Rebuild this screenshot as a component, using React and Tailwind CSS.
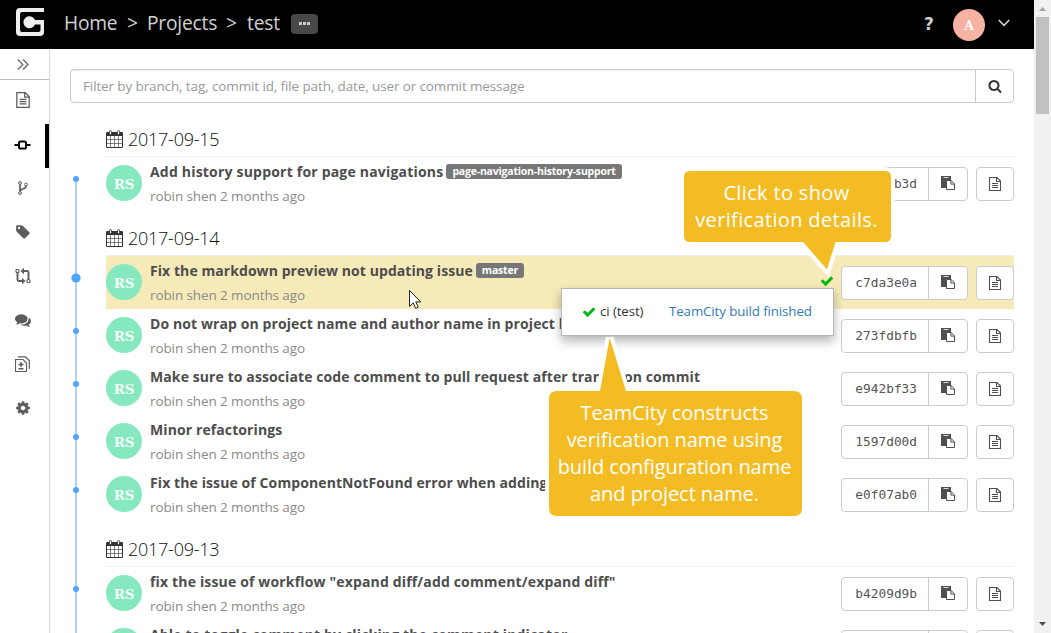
import React from "react";

const GEAR =
  "M1152 896q0-106-75-181t-181-75-181 75-75 181 75 181 181 75 181-75 75-181zm512-109v222q0 12-8 23t-20 13l-185 28q-19 54-39 91 35 50 107 138 10 12 10 25t-9 23q-27 37-99 108t-94 71q-12 0-26-9l-138-108q-44 23-91 38-16 136-29 186-7 28-36 28h-222q-14 0-24.5-8.5t-11.5-21.5l-28-184q-49-16-90-37l-141 107q-10 9-25 9-14 0-25-11-126-114-165-168-7-10-7-23 0-12 8-23 15-21 51-66.5t54-70.5q-27-50-41-99l-183-27q-13-2-21-12.5t-8-23.5v-222q0-12 8-23t19-13l186-28q14-46 39-92-40-57-107-138-10-12-10-24 0-10 9-23 26-36 98.5-107.5t94.5-71.5q13 0 26 10l138 107q44-23 91-38 16-136 29-186 7-28 36-28h222q14 0 24.5 8.5t11.5 21.5l28 184q49 16 90 37l142-107q9-9 24-9 13 0 25 10 129 119 165 170 7 8 7 22 0 12-8 23-15 21-51 66.5t-54 70.5q26 50 41 98l183 28q13 2 21 12.5t8 23.5z";
const TAG =
  "M576 448q0-53-37.5-90.5t-90.5-37.5-90.5 37.5-37.5 90.5 37.5 90.5 90.5 37.5 90.5-37.5 37.5-90.5zm1067 576q0 53-37 90l-491 492q-39 37-91 37-53 0-90-37l-715-716q-38-37-64.5-101t-26.5-117v-416q0-52 38-90t90-38h416q53 0 117 26.5t102 64.5l715 714q37 39 37 91z";
const COMMENTS =
  "M1408 768q0 139-94 257t-256.5 186.5-353.5 68.5q-86 0-176-16-124 88-278 128-36 9-86 16h-3q-11 0-20.5-8t-11.5-21q-1-3-1-6.5t.5-6.5 2-6l2.5-5 3.5-5.5 4-5 4.5-5 4-4.5q5-6 23-25t26-29.5 22.5-29 25-38.5 20.5-44q-124-72-195-177t-71-224q0-139 94-257t256.5-186.5 353.5-68.5 353.5 68.5 256.5 186.5 94 257zm384 256q0 120-71 224.5t-195 176.5q10 24 20.5 44t25 38.5 22.5 29 26 29.5 23 25q1 1 4 4.5t4.5 5 4 5 3.5 5.5l2.5 5 2 6 .5 6.5-1 6.5q-3 14-13 22t-22 7q-50-7-86-16-154-40-278-128-90 16-176 16-271 0-472-132 58 4 88 4 161 0 309-45t264-129q125-92 192-212t67-254q0-77-23-152 129 71 204 178t75 230z";
const SEARCH =
  "M1216 832q0-185-131.5-316.5t-316.5-131.5-316.5 131.5-131.5 316.5 131.5 316.5 316.5 131.5 316.5-131.5 131.5-316.5zm512 832q0 52-38 90t-90 38q-54 0-90-38l-343-342q-179 124-399 124-143 0-273.5-55.5t-225-150-150-225-55.5-273.5 55.5-273.5 150-225 225-150 273.5-55.5 273.5 55.5 225 150 150 225 55.5 273.5q0 220-124 399l343 343q37 37 37 90z";
const CHECK =
  "M1671 566q0 40-28 68l-724 724-136 136q-28 28-68 28t-68-28l-136-136-362-362q-28-28-28-68t28-68l136-136q28-28 68-28t68 28l294 295 656-657q28-28 68-28t68 28l136 136q28 28 28 68z";

function Glyph({ d, className }) {
  return (
    <svg viewBox="0 0 1792 1792" fill="currentColor" className={className}>
      <path d={d} />
    </svg>
  );
}

function FileIcon({ className = "" }) {
  return (
    <svg width="14" height="16" viewBox="0 0 14 16" fill="none" stroke="currentColor" className={className}>
      <path d="M1.5 1.5h7.5l3.5 3.5v9.5h-11zM8.5 1.5v4h4M4 7.5h6M4 9.5h6M4 11.5h6" strokeWidth="1.1" />
    </svg>
  );
}

function PasteIcon() {
  return (
    <svg width="14" height="14" viewBox="0 0 14 14" fill="none" className="text-[#4f4f4f]">
      <path d="M0 0h10v4h-4.6v8h-5.4z" fill="currentColor" />
      <path d="M2.5 1.5h5" stroke="#fff" strokeWidth="0.8" />
      <path d="M5.500 4.500h4.600l3.400 3.400v5.600h-8z" fill="#fff" stroke="currentColor" />
      <path d="M9.900 4.500v3.600h3.600" stroke="currentColor" />
    </svg>
  );
}

function CalendarIcon() {
  return (
    <svg width="17" height="18" viewBox="0 0 17 18" fill="none" className="text-[#333]">
      <path d="M0 3.200q0-1.200 1.200-1.200h14.600q1.200 0 1.200 1.200v13.600q0 1.200-1.200 1.200H1.200Q0 18 0 16.800z" fill="currentColor" />
      <path d="M1 6h15v11h-15z" fill="#fff" />
      <path d="M4.500 6v11M8.500 6v11M12.500 6v11M1 9.500h15M1 13.500h15" stroke="currentColor" strokeWidth="0.6" />
      <rect x="3.400" y="0.600" width="2.200" height="4" rx="1.100" fill="#fff" stroke="currentColor" strokeWidth="0.900" />
      <rect x="11.400" y="0.600" width="2.200" height="4" rx="1.100" fill="#fff" stroke="currentColor" strokeWidth="0.900" />
    </svg>
  );
}

function CommitIcon() {
  return (
    <svg width="17" height="12" viewBox="0 0 17 12" fill="none" stroke="currentColor" strokeWidth="2">
      <rect x="5" y="2.500" width="7" height="7" rx="1.600" />
      <path d="M0.500 6h4M12.500 6h4" />
    </svg>
  );
}

function BranchIcon() {
  return (
    <svg width="10" height="14" viewBox="0 0 10 14" fill="none" stroke="currentColor" strokeWidth="1">
      <circle cx="2" cy="2" r="1.400" />
      <circle cx="2" cy="12" r="1.400" />
      <circle cx="8" cy="3.500" r="1.400" />
      <path d="M2 3.400v7.200M8 5c0 3.600-5 2-5.700 5" strokeWidth="1.700" />
    </svg>
  );
}

function CompareIcon() {
  return (
    <svg width="16" height="16" viewBox="0 0 16 16" fill="none" stroke="currentColor">
      <rect x="1" y="1.500" width="3" height="3" rx="1" strokeWidth="1.200" />
      <rect x="12" y="11.500" width="3" height="3" rx="1" strokeWidth="1.200" />
      <path d="M2.500 5v6.500q0 1.500 1.500 1.500h3M13.500 11v-6.500q0-1.500-1.500-1.500h-3" strokeWidth="1.900" />
      <path d="M7 9.800l3.500 3.200-3.500 3.200zM9 -0.200l-3.500 3.200 3.500 3.200z" fill="currentColor" stroke="none" />
    </svg>
  );
}

function DiffIcon() {
  return (
    <svg width="15" height="16" viewBox="0 0 15 16" fill="none" stroke="currentColor">
      <path d="M0.500 3.500h7.500l3.500 3.500v8.500h-11z" strokeWidth="1.100" />
      <path d="M3 0.800h7.500l3.800 3.800v8.400" strokeWidth="1.200" />
      <path d="M3.500 8.500h5M6 6v5M3.500 12.800h5" strokeWidth="1.500" />
    </svg>
  );
}

function NavItem({ active, children }) {
  return (
    <div
      className={
        active
          ? "flex h-11 w-full items-center justify-center border-r-4 border-black pb-[3px] text-black"
          : "flex h-11 w-full items-center justify-center pr-1 pb-1 text-[#5c5c5c]"
      }
    >
      {children}
    </div>
  );
}

function Avatar() {
  return (
    <div className="mt-2 flex h-9 w-9 shrink-0 items-center justify-center rounded-full bg-[#86e8bf] pt-[3px] font-['DejaVu_Serif',serif] text-[13.5px] leading-none font-bold tracking-[-0.2px] text-white/90">
      RS
    </div>
  );
}

function Commit({ title, label, hash, active, verified, tracking = "tracking-[0.16px]" }) {
  return (
    <div className={active ? "flex h-[53px] bg-[#f6eab9]" : "flex h-[53px]"}>
      <Avatar />
      <div className="min-w-0 flex-1 pt-[5px] pl-2">
        <div className="flex h-5 items-center gap-[3px] text-[14px] leading-5 font-bold whitespace-nowrap text-[#4d4d4d]">
          <span className={tracking}>{title}</span>
          {label && (
            <span className="-mt-px flex h-[15px] items-center rounded-[3px] bg-[#777] px-1.5 text-[10.5px] leading-none tracking-[-0.2px] text-white">
              {label}
            </span>
          )}
        </div>
        <div className="mt-[5px] text-[13.5px] leading-[19px] tracking-[-0.1px] text-[#8a8a8a]">robin shen 2 months ago</div>
      </div>
      {verified && <Glyph d={CHECK} className="mt-[18px] mr-[7px] h-3.5 w-3.5 text-[#00b813]" />}
      <div className="mt-2.5 flex h-[34px] w-[127px] shrink-0 rounded-[4px] border border-[#ccc] bg-white">
        <div className="flex w-[87px] items-center justify-end border-r border-[#ccc] pr-[11px] font-['DejaVu_Sans_Mono',monospace] text-[12.8px] text-[#555]">
          {hash}
        </div>
        <div className="flex flex-1 items-center justify-center pb-0.5">
          <PasteIcon />
        </div>
      </div>
      <div className="mt-2.5 ml-2 flex h-[34px] w-[38px] shrink-0 items-center justify-center rounded-[4px] border border-[#ccc] bg-white text-[#4f4f4f]">
        <FileIcon />
      </div>
    </div>
  );
}

function DateHeading({ date }) {
  return (
    <div className="flex h-[46px] items-end gap-[5px] border-b border-[#eee] pb-[5px] text-[18px] leading-6 font-light tracking-[-0.25px] text-[#111]">
      <div className="mb-[3px]">
        <CalendarIcon />
      </div>
      <span>{date}</span>
    </div>
  );
}

function HistoryGraph() {
  return (
    <svg width="36" height="530" viewBox="0 0 36 530" className="shrink-0">
      <rect x="5" y="76" width="2" height="454" fill="#a9d3fd" />
      {[76, 228, 281, 334, 387, 486].map((y) => (
        <circle key={y} cx="6" cy={y} r="3" fill="#4fa5fb" />
      ))}
      <circle cx="6" cy="175" r="4.600" fill="#4fa5fb" />
    </svg>
  );
}

export default function App() {
  return (
    <div className="relative flex h-[633px] w-[1051px] overflow-hidden bg-white font-['Open_Sans',sans-serif]">
      <div className="flex w-[1034px] flex-col">
        <header className="flex h-[49px] shrink-0 items-center bg-black pl-4 text-[#d2d2d2]">
          <svg width="28" height="28" viewBox="0 0 28 28" className="mr-px -mt-[5px]" fill="#eee">
            <path d="M4 0h24v4H6q-2 0-2 2v16q0 2 2 2h16.500q2 0 2-2v-5.500h-5.500a6 6 0 1 1 0-4.500H28v12q0 4-4 4H4q-4 0-4-4V4q0-4 4-4z" />
          </svg>
          <nav className="flex items-center pb-[3px] pl-[19px] text-[19.2px] leading-6 tracking-[-0.2px] whitespace-nowrap">
            <span className="w-[63px]">Home</span>
            <span className="w-5">&gt;</span>
            <span className="w-[79px]">Projects</span>
            <span className="w-[21px]">&gt;</span>
            <span className="w-11">test</span>
          </nav>
          <div className="-mt-0.5 flex h-5 w-[27px] items-center justify-center gap-px rounded-[4px] bg-[#484848]">
            <i className="h-[3px] w-[3px] bg-[#ccc]" />
            <i className="h-[3px] w-[3px] bg-[#ccc]" />
            <i className="h-[3px] w-[3px] bg-[#ccc]" />
          </div>
          <div className="ml-auto flex items-center pr-[24px]">
            <span className="w-[29px] font-['DejaVu_Sans',sans-serif] text-[17px] leading-none font-bold">?</span>
            <div className="flex h-8 w-8 items-center justify-center rounded-full bg-[#f6b2a2] pt-[4px] font-['DejaVu_Serif',serif] text-[12.5px] leading-none font-bold text-white">
              A
            </div>
            <svg width="12" height="8" viewBox="0 0 12 8" className="-mt-[3px] ml-[13px]" fill="none" stroke="currentColor" strokeWidth="1.700">
              <path d="M0.700 1l5.300 5.300L11.300 1" />
            </svg>
          </div>
        </header>
        <div className="flex min-h-0 flex-1">
          <aside className="flex w-[50px] shrink-0 flex-col border-r border-[#d9d9d9]">
            <div className="flex h-[31px] items-center justify-center border-b border-[#bbb] pr-[3px] text-[#666]">
              <svg width="12" height="11" viewBox="0 0 12 11" fill="none" stroke="currentColor" strokeWidth="1.300">
                <path d="M0.800 0.500l5 5-5 5M6 0.500l5 5-5 5" />
              </svg>
            </div>
            <NavItem><FileIcon className="h-[18px] w-4" /></NavItem>
            <NavItem active><CommitIcon /></NavItem>
            <NavItem><BranchIcon /></NavItem>
            <NavItem><Glyph d={TAG} className="h-4 w-4" /></NavItem>
            <NavItem><CompareIcon /></NavItem>
            <NavItem><Glyph d={COMMENTS} className="h-4 w-4" /></NavItem>
            <NavItem><DiffIcon /></NavItem>
            <NavItem><Glyph d={GEAR} className="h-4 w-4" /></NavItem>
          </aside>
          <main className="min-w-0 flex-1 px-5 pt-5">
            <div className="flex h-[34px] rounded-[4px] border border-[#ccc]">
              <div className="flex flex-1 items-center border-r border-[#ccc] pt-px pl-3 text-[13.5px] tracking-[-0.12px] text-[#999] shadow-[inset_0_1px_1px_rgba(0,0,0,0.075)]">
                Filter by branch, tag, commit id, file path, date, user or commit message
              </div>
              <div className="flex w-[37px] items-center justify-center text-[#333]">
                <Glyph d={SEARCH} className="h-3.5 w-3.5" />
              </div>
            </div>
            <div className="flex">
              <HistoryGraph />
              <div className="min-w-0 flex-1 pt-2">
                <DateHeading date="2017-09-15" />
                <Commit
                  title="Add history support for page navigations"
                  label="page-navigation-history-support"
                  hash="b3d"
                  tracking="tracking-[0.2px]"
                />
                <DateHeading date="2017-09-14" />
                <Commit
                  title="Fix the markdown preview not updating issue"
                  label="master"
                  hash="c7da3e0a"
                  tracking="tracking-[0.07px]"
                  active
                  verified
                />
                <Commit title="Do not wrap on project name and author name in project list" hash="273fdbfb" tracking="tracking-[0.1px]" />
                <Commit
                  title="Make sure to associate code comment to pull request after transition commit"
                  hash="e942bf33"
                  tracking="tracking-[0.1px]"
                />
                <Commit title="Minor refactorings" hash="1597d00d" tracking="tracking-[0.1px]" />
                <Commit title="Fix the issue of ComponentNotFound error when adding" hash="e0f07ab0" tracking="tracking-[0.1px]" />
                <DateHeading date="2017-09-13" />
                <Commit title={'fix the issue of workflow "expand diff/add comment/expand diff"'} hash="b4209d9b" />
                <Commit title="Able to toggle comment by clicking the comment indicator" />
              </div>
            </div>
          </main>
        </div>
      </div>

      <div className="flex flex-1 flex-col items-center bg-[#f1f1f1]">
        <svg width="17" height="17" viewBox="0 0 17 17">
          <path d="M5 11l3.500-4 3.500 4z" fill="#a3a3a3" />
        </svg>
        <div className="h-[97px] w-[13px] bg-[#c1c1c1]" />
        <svg width="17" height="17" viewBox="0 0 17 17" className="mt-auto">
          <path d="M5 6l3.500 4L12 6z" fill="#505050" />
        </svg>
      </div>

      <div className="absolute top-[288px] left-[561px] flex h-12 w-[273px] items-center border border-[#b8b8b8] bg-white pl-5 text-[13.3px] tracking-[-0.1px] whitespace-nowrap text-[#333] shadow-[0_5px_10px_rgba(0,0,0,0.3)]">
        <Glyph d={CHECK} className="h-3.5 w-3.5 text-[#00b813]" />
        <span className="w-[69px] pl-1">ci (test)</span>
        <span className="pl-1 text-[#337ab7]">TeamCity build finished</span>
      </div>

      <svg width="1051" height="633" viewBox="0 0 1051 633" className="pointer-events-none absolute inset-0">
        <g fill="#f4bc23" stroke="#fff" strokeWidth="8" strokeLinejoin="miter" style={{ paintOrder: "stroke" }}>
          <path d="M690 171H885Q891 171 891 177V236Q891 242 885 242H835.500L827 269.500L803 242H690Q684 242 684 236V177Q684 171 690 171z" />
          <path d="M557 391H600L609.700 338L626 391H794Q802 391 802 399V508Q802 516 794 516H557Q549 516 549 508V399Q549 391 557 391z" />
        </g>
        <path d="M409.500 290.500v16l3.700-3.600 2.500 5.500 2.600-1.200-2.500-5.300h5z" fill="#fff" stroke="#222" />
      </svg>
      <div className="absolute top-[179px] left-[683px] w-[207px] text-center text-[20px] leading-[27px] tracking-[0.35px] text-white">
        Click to show
        <br />
        verification details.
      </div>
      <div className="absolute top-[399px] left-[548px] w-[253px] text-center text-[20px] leading-[27px] tracking-[-0.05px] whitespace-nowrap text-white">
        TeamCity constructs
        <br />
        verification name using
        <br />
        build configuration name
        <br />
        and project name.
      </div>
    </div>
  );
}
